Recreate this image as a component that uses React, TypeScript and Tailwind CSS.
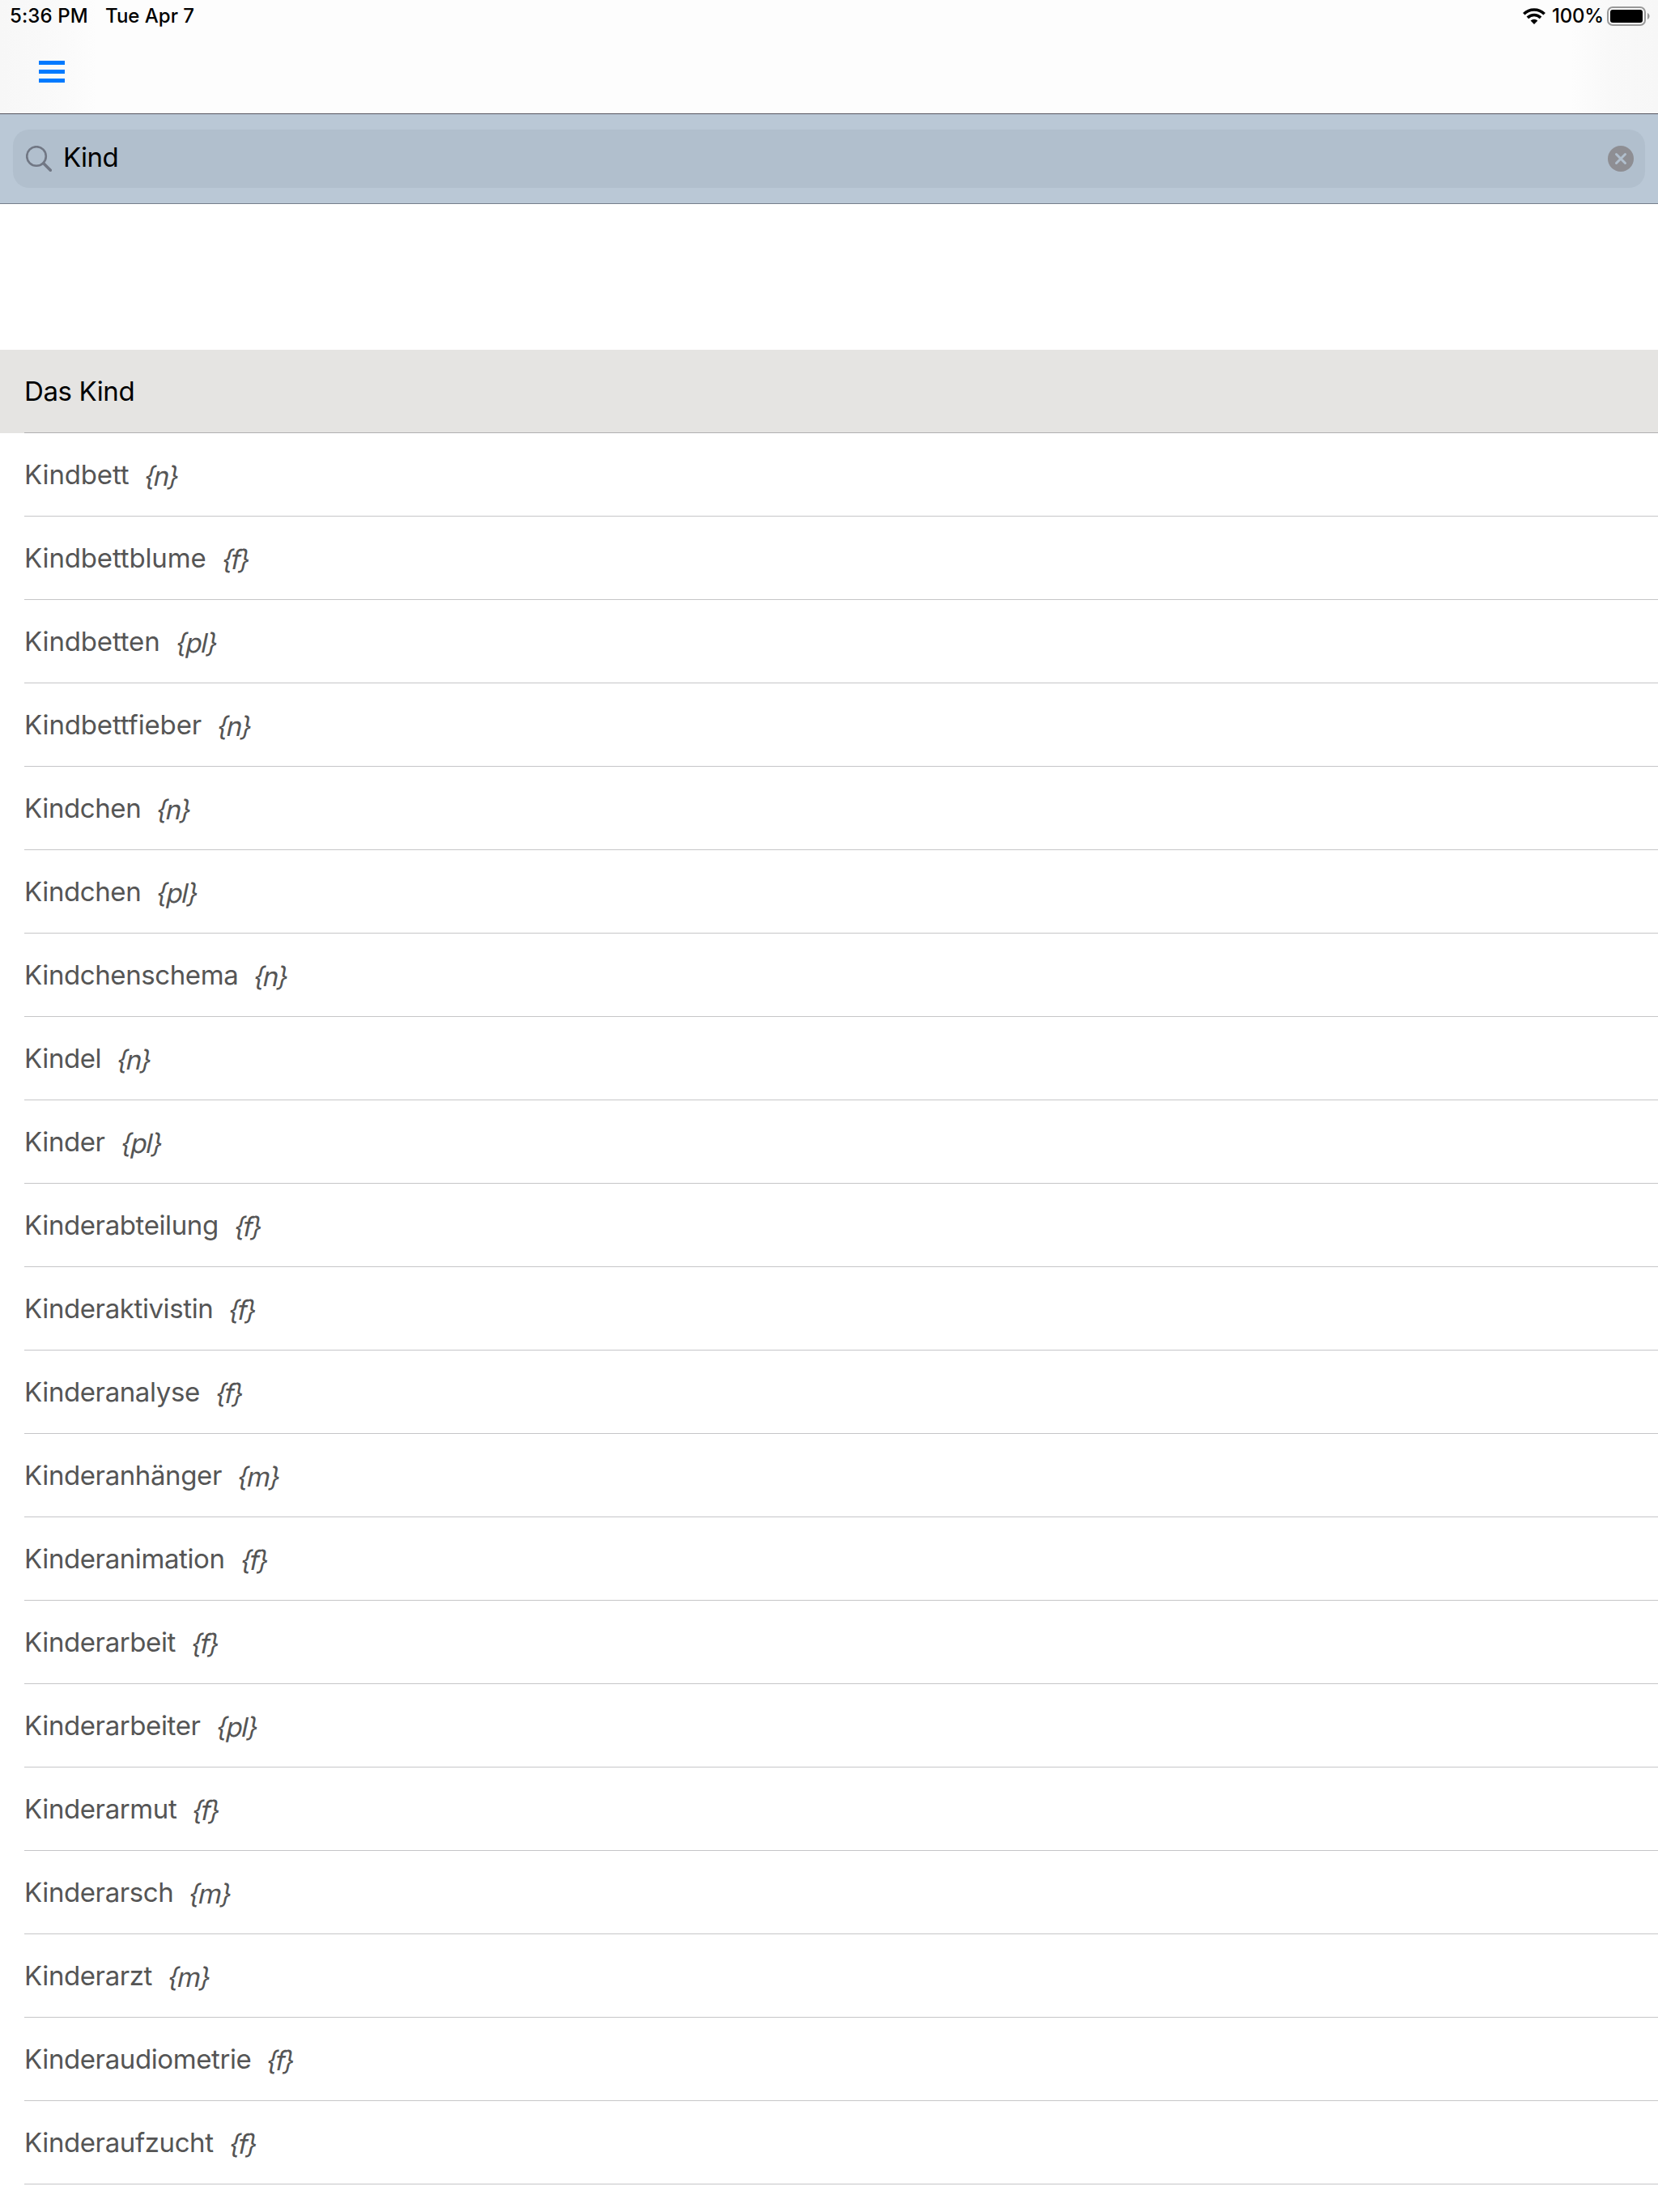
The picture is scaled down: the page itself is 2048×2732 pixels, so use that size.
import React from "react";

interface Entry {
  word: string;
  tag?: string;
}

const entries: Entry[] = [
  { word: "Das Kind" },
  { word: "Kindbett", tag: "n" },
  { word: "Kindbettblume", tag: "f" },
  { word: "Kindbetten", tag: "pl" },
  { word: "Kindbettfieber", tag: "n" },
  { word: "Kindchen", tag: "n" },
  { word: "Kindchen", tag: "pl" },
  { word: "Kindchenschema", tag: "n" },
  { word: "Kindel", tag: "n" },
  { word: "Kinder", tag: "pl" },
  { word: "Kinderabteilung", tag: "f" },
  { word: "Kinderaktivistin", tag: "f" },
  { word: "Kinderanalyse", tag: "f" },
  { word: "Kinderanhänger", tag: "m" },
  { word: "Kinderanimation", tag: "f" },
  { word: "Kinderarbeit", tag: "f" },
  { word: "Kinderarbeiter", tag: "pl" },
  { word: "Kinderarmut", tag: "f" },
  { word: "Kinderarsch", tag: "m" },
  { word: "Kinderarzt", tag: "m" },
  { word: "Kinderaudiometrie", tag: "f" },
  { word: "Kinderaufzucht", tag: "f" },
];

const tagTracking: Record<string, string> = {
  n: "tracking-[-2.2px]",
  m: "tracking-[-2px]",
  f: "tracking-[-2.8px]",
  pl: "tracking-[-1.5px]",
};

const WifiIcon = () => (
  <svg className="h-[20px] w-[28px]" viewBox="0 0 28 20">
    <g fill="none" stroke="#000" strokeWidth="3.6">
      <path d="M1.300 7.200a18 18 0 0 1 25.400 0" />
      <path d="M5.900 11.900a11.500 11.500 0 0 1 16.200 0" />
    </g>
    <path d="M14 20l-4.400-4.500a6.300 6.300 0 0 1 8.800 0z" />
  </svg>
);

const BatteryIcon = () => (
  <svg className="h-[24px] w-[54px]" viewBox="0 0 54 24">
    <rect x="1" y="1" width="46" height="22" rx="6" fill="none" stroke="#999" strokeWidth="2" />
    <rect x="4" y="4" width="40" height="16" rx="3" />
    <path d="M50 8c3.400 1.600 3.400 6.400 0 8z" fill="#999" />
  </svg>
);

const StatusBar = () => (
  <div className="flex h-10 items-center justify-between pl-[12px] pr-[9px] text-[24px] font-medium leading-10">
    <div className="flex">
      <span className="w-[118px] whitespace-nowrap tracking-[0.1px]">5:36 PM</span>
      <span className="whitespace-nowrap">Tue Apr 7</span>
    </div>
    <div className="flex items-center">
      <WifiIcon />
      <span className="ml-[8px] w-[68px] whitespace-nowrap tracking-[-0.2px]">100%</span>
      <BatteryIcon />
    </div>
  </div>
);

const SearchBar = () => (
  <div className="h-[112px] border-y border-t-[#55555f] border-b-[#757f8b] bg-[#bac8d6] px-4 py-[19px]">
    <div className="flex h-[72px] items-center rounded-[20px] bg-[#b1bfcd] pl-4 pr-[14px]">
      <svg className="h-8 w-8" viewBox="0 0 32 32" fill="none" stroke="#717784">
        <circle cx="13" cy="13" r="11.800" strokeWidth="2.600" />
        <path d="M21.800 21.800l8.500 8.500" strokeWidth="3.600" strokeLinecap="round" />
      </svg>
      <span className="ml-[14px] pb-[2px] text-[33px] tracking-[-0.6px]">Kind</span>
      <svg className="ml-auto h-8 w-8" viewBox="0 0 32 32">
        <circle cx="16" cy="16" r="16" fill="#8e8e93" />
        <path d="M10.500 10.500l11 11m0-11l-11 11" stroke="#b1bfcd" strokeWidth="3" strokeLinecap="round" />
      </svg>
    </div>
  </div>
);

const Row = ({ word, tag }: Entry) => (
  <li className={tag ? "pl-[30px] text-[#555]" : "bg-[#e5e4e2] pl-[30px] text-black"}>
    <div
      className={
        tag
          ? "flex h-[103px] items-center border-b border-[#c6c6c8] pt-px"
          : "flex h-[103px] items-center border-b border-[#b0b0b0] pt-px"
      }
    >
      <span
        className={word.includes("tt") ? "text-[33px] tracking-[-0.15px]" : "text-[33px] tracking-[-0.4px]"}
      >
        {word}
      </span>
      {/* slanted upright letters, the true italic has a descending f */}
      {tag && (
        <span className={`ml-[20px] inline-block -skew-x-[12deg] pt-[4px] text-[33px] ${tagTracking[tag]}`}>
          {`{${tag}}`}
        </span>
      )}
    </div>
  </li>
);

const App = () => {
  return (
    <div className="h-[2732px] w-[2048px] overflow-hidden bg-white font-['Inter',sans-serif] text-black">
      <header className="h-[140px] bg-[linear-gradient(to_right,#f7f7f7_0,#fafafa_80px,#fdfdfd_120px,#fdfdfd_1940px,#f9f9f9_1985px,#f7f7f7_2048px)]">
        <StatusBar />
        <button className="ml-12 mt-[35px] flex flex-col gap-[6px]">
          <span className="h-[5px] w-8 bg-[#007aff]" />
          <span className="h-[5px] w-8 bg-[#007aff]" />
          <span className="h-[5px] w-8 bg-[#007aff]" />
        </button>
      </header>
      <SearchBar />
      <ul className="mt-[180px]">
        {entries.map((entry, i) => (
          <Row key={i} word={entry.word} tag={entry.tag} />
        ))}
      </ul>
    </div>
  );
};

export default App;
